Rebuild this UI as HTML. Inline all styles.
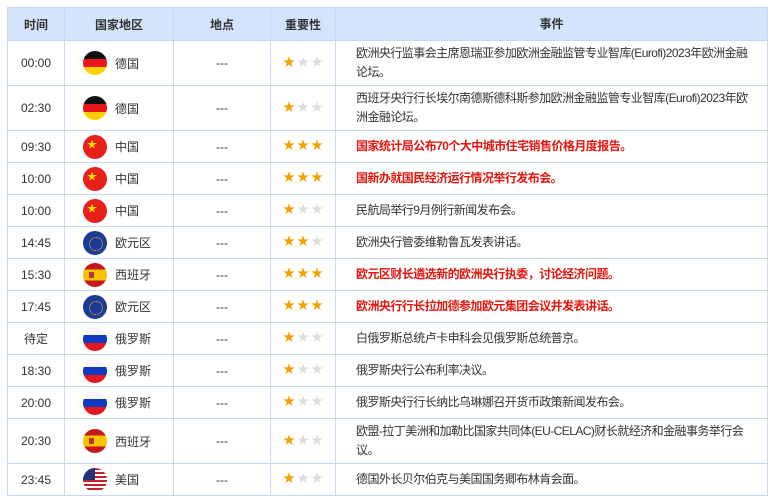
<!DOCTYPE html><html><head><meta charset="utf-8"><style>
*{margin:0;padding:0;box-sizing:border-box}
body{width:773px;height:502px;background:#fff;font-family:"Liberation Sans","Noto Sans CJK SC",sans-serif;font-size:12px;color:#333;position:relative;overflow:hidden}
.r{position:absolute;left:7px;width:761px;border-left:1px solid #c8d8f2;border-top:1px solid #c8d8f2;border-right:1px solid #c8d8f2}
.c{position:absolute;top:0;bottom:0;display:flex;align-items:center;border-right:1px solid #c8d8f2}
.c1{left:0;width:57px;justify-content:center}
.c2{left:57px;width:109px;padding-left:18px}
.c3{left:166px;width:97px;justify-content:center}
.c4{left:263px;width:65px;padding-left:12px}
.c5{left:328px;right:0;border-right:none;padding-left:20px;padding-right:0;line-height:19px;letter-spacing:-0.55px;white-space:nowrap}
.h{background:#d4e4fc;font-weight:bold;color:#333;font-size:12px}
.h .c2{justify-content:center;padding-left:0}.h .c4{justify-content:center;padding-left:0}.h .c5{justify-content:center;padding-left:0;letter-spacing:0}
.f{width:24px;height:24px;border-radius:50%;overflow:hidden;margin-right:8px;flex:none;position:relative}
.de{background:linear-gradient(#111 0 33%,#e8161b 33% 66%,#ffcf00 66%)}
.cn{background:#e8201a}
.cn:after{content:"★";position:absolute;left:4px;top:1px;color:#ffde00;font-size:10px}
.eu{background:#1b3a9a}
.eu:after{content:"";position:absolute;left:6px;top:6px;width:12px;height:12px;border-radius:50%;border:1px dotted #f0c800}
.es{background:linear-gradient(#c8161d 0 27%,#f7c400 27% 73%,#c8161d 73%)}
.es:after{content:"";position:absolute;left:6px;top:9px;width:5px;height:6px;background:#b33}
.ru{background:linear-gradient(#f6f6f6 0 33%,#1138c4 33% 66%,#e5181d 66%)}
.us{background:repeating-linear-gradient(#c8202b 0 2px,#fff 2px 4px)}
.us:after{content:"";position:absolute;left:0;top:0;width:12px;height:12px;background:#23357a}
.s{font-size:12px;letter-spacing:2px;color:#ddd;padding-bottom:4px}.s b{color:#f5a200;font-weight:normal}
.red{color:#e3150f;font-weight:bold}
.bot{position:absolute;left:7px;top:495px;width:761px;border-top:1px solid #c8d8f2}
</style></head><body>
<div class="r h" style="top:7px;height:33px"><div class="c c1">时间</div><div class="c c2">国家地区</div><div class="c c3">地点</div><div class="c c4">重要性</div><div class="c c5">事件</div></div>

<div class="r" style="top:40px;height:45px"><div class="c c1">00:00</div><div class="c c2"><span class="f de"></span>德国</div><div class="c c3">---</div><div class="c c4 s"><b>★</b>★★</div><div class="c c5">欧洲央行监事会主席恩瑞亚参加欧洲金融监管专业智库(Eurofi)2023年欧洲金融<br>论坛。</div></div>
<div class="r" style="top:85px;height:45px"><div class="c c1">02:30</div><div class="c c2"><span class="f de"></span>德国</div><div class="c c3">---</div><div class="c c4 s"><b>★</b>★★</div><div class="c c5">西班牙央行行长埃尔南德斯德科斯参加欧洲金融监管专业智库(Eurofi)2023年欧<br>洲金融论坛。</div></div>
<div class="r" style="top:130px;height:32px"><div class="c c1">09:30</div><div class="c c2"><span class="f cn"></span>中国</div><div class="c c3">---</div><div class="c c4 s"><b>★★★</b></div><div class="c c5 red">国家统计局公布70个大中城市住宅销售价格月度报告。</div></div>
<div class="r" style="top:162px;height:32px"><div class="c c1">10:00</div><div class="c c2"><span class="f cn"></span>中国</div><div class="c c3">---</div><div class="c c4 s"><b>★★★</b></div><div class="c c5 red">国新办就国民经济运行情况举行发布会。</div></div>
<div class="r" style="top:194px;height:32px"><div class="c c1">10:00</div><div class="c c2"><span class="f cn"></span>中国</div><div class="c c3">---</div><div class="c c4 s"><b>★</b>★★</div><div class="c c5">民航局举行9月例行新闻发布会。</div></div>
<div class="r" style="top:226px;height:32px"><div class="c c1">14:45</div><div class="c c2"><span class="f eu"></span>欧元区</div><div class="c c3">---</div><div class="c c4 s"><b>★★</b>★</div><div class="c c5">欧洲央行管委维勒鲁瓦发表讲话。</div></div>
<div class="r" style="top:258px;height:32px"><div class="c c1">15:30</div><div class="c c2"><span class="f es"></span>西班牙</div><div class="c c3">---</div><div class="c c4 s"><b>★★★</b></div><div class="c c5 red">欧元区财长遴选新的欧洲央行执委，讨论经济问题。</div></div>
<div class="r" style="top:290px;height:32px"><div class="c c1">17:45</div><div class="c c2"><span class="f eu"></span>欧元区</div><div class="c c3">---</div><div class="c c4 s"><b>★★★</b></div><div class="c c5 red">欧洲央行行长拉加德参加欧元集团会议并发表讲话。</div></div>
<div class="r" style="top:322px;height:32px"><div class="c c1">待定</div><div class="c c2"><span class="f ru"></span>俄罗斯</div><div class="c c3">---</div><div class="c c4 s"><b>★</b>★★</div><div class="c c5">白俄罗斯总统卢卡申科会见俄罗斯总统普京。</div></div>
<div class="r" style="top:354px;height:32px"><div class="c c1">18:30</div><div class="c c2"><span class="f ru"></span>俄罗斯</div><div class="c c3">---</div><div class="c c4 s"><b>★</b>★★</div><div class="c c5">俄罗斯央行公布利率决议。</div></div>
<div class="r" style="top:386px;height:32px"><div class="c c1">20:00</div><div class="c c2"><span class="f ru"></span>俄罗斯</div><div class="c c3">---</div><div class="c c4 s"><b>★</b>★★</div><div class="c c5">俄罗斯央行行长纳比乌琳娜召开货币政策新闻发布会。</div></div>
<div class="r" style="top:418px;height:45px"><div class="c c1">20:30</div><div class="c c2"><span class="f es"></span>西班牙</div><div class="c c3">---</div><div class="c c4 s"><b>★</b>★★</div><div class="c c5">欧盟-拉丁美洲和加勒比国家共同体(EU-CELAC)财长就经济和金融事务举行会<br>议。</div></div>
<div class="r" style="top:463px;height:32px"><div class="c c1">23:45</div><div class="c c2"><span class="f us"></span>美国</div><div class="c c3">---</div><div class="c c4 s"><b>★</b>★★</div><div class="c c5">德国外长贝尔伯克与美国国务卿布林肯会面。</div></div>
<div class="bot"></div>
</body></html>
